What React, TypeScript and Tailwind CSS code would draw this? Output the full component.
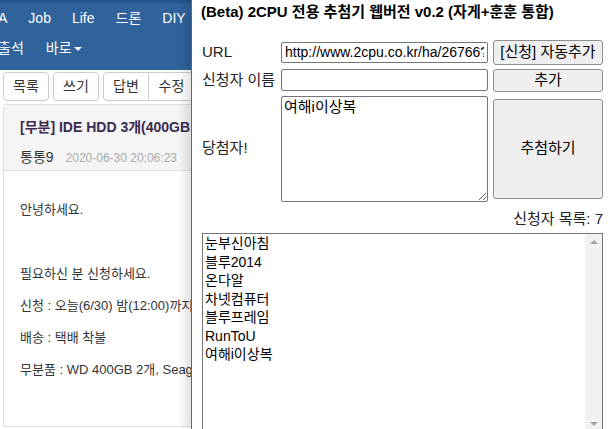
const ko = "font-['Liberation_Sans','Noto_Sans_CJK_KR',sans-serif]";

const APPLICANTS = ["눈부신아침", "블루2014", "온다알", "차넷컴퓨터", "블루프레임", "RunToU", "여해i이상복"];

function BoardPage() {
  return (
    <div className={`w-[640px] ${ko} text-[#333]`}>
      <div className="h-[70px] bg-[#30639b] border-t-[3px] border-[#28548a] text-white text-[14px]">
        <div className="flex h-[30px] items-center gap-[21px] ml-[-2px]">
          <span>A</span>
          <span>Job</span>
          <span>Life</span>
          <span>드론</span>
          <span>DIY</span>
        </div>
        <div className="flex h-[30px] items-center gap-[22px] ml-[-2px]">
          <span>출석</span>
          <span className="flex items-center gap-[2px]">
            바로
            <span className="inline-block border-x-[4px] border-t-[4px] border-x-transparent border-t-white mt-[2px]" />
          </span>
        </div>
      </div>
      <div className="flex px-[3px] pt-[2px] text-[14px]">
        <div className="w-[46px] h-[29px] flex items-center justify-center border border-[#ccc] rounded-[4px] bg-white">목록</div>
        <div className="w-[46px] h-[29px] ml-[4px] flex items-center justify-center border border-[#ccc] rounded-[4px] bg-white">쓰기</div>
        <div className="ml-[4px] flex">
          <div className="w-[46px] h-[29px] flex items-center justify-center border border-[#ccc] rounded-l-[4px] bg-white">답변</div>
          <div className="w-[46px] h-[29px] flex items-center justify-center border border-l-0 border-[#ccc] bg-white">수정</div>
        </div>
      </div>
      <div className="mx-[3px] mt-[3px] border border-[#ddd] rounded-t-[4px]">
        <div className="bg-[#f5f5f5] border-b border-[#ddd] px-[16px] pt-[12px] h-[66px]">
          <div className="text-[14px] font-bold text-[#3a2a50] whitespace-nowrap">[무분] IDE HDD 3개(400GB 2개, 250GB 1개)</div>
          <div className="mt-[9px] flex items-baseline gap-[12px]">
            <span className="text-[14px]">통통9</span>
            <span className="text-[12px] text-[#aaa]">2020-06-30 20:06:23</span>
          </div>
        </div>
        <div className="px-[16px] pt-[23px] pb-[40px] text-[13px] leading-[32px] whitespace-nowrap">
          <p>안녕하세요.</p>
          <p>&nbsp;</p>
          <p>필요하신 분 신청하세요.</p>
          <p>신청 : 오늘(6/30) 밤(12:00)까지</p>
          <p>배송 : 택배 착불</p>
          <p>무분품 : WD 400GB 2개, Seagate 250GB 1개</p>
        </div>
      </div>
    </div>
  );
}

function DrawPanel() {
  const btn = "flex items-center justify-center border border-[#8f8f8f] rounded-[3px] bg-[#efefef] text-[15px] text-black whitespace-nowrap";
  const field = "w-full border border-[#767676] rounded-[2px] text-black outline-none";
  return (
    <div className={`absolute top-0 left-[191px] w-[418px] h-[429px] bg-white border-l border-[#666] shadow-[-6px_0_8px_rgba(0,0,0,0.12)] pl-[10px] pr-[6px] ${ko} text-black`}>
      <div className="pt-[1px] text-[15px] font-bold ml-[-1px] whitespace-nowrap">
        (Beta) 2CPU 전용 추첨기 웹버전 v0.2 (자게+훈훈 통합)
      </div>
      <div className="mt-[16px] grid grid-cols-[74px_207px_110px] gap-x-[5px] items-center text-[15px]">
        <div className="text-[#222]">URL</div>
        <input
          readOnly
          value="http://www.2cpu.co.kr/ha/26766?page=1"
          className={`${field} h-[21px] px-[3px] text-[14px] ${ko}`}
        />
        <div className={`${btn} h-[25px]`}>[신청] 자동추가</div>

        <div className="mt-[4px] text-[#222] whitespace-nowrap">신청자 이름</div>
        <input readOnly value="" className={`${field} mt-[4px] h-[22px]`} />
        <div className={`${btn} mt-[4px] h-[23px]`}>추가</div>

        <div className="mt-[4px] text-[#222]">당첨자!</div>
        <textarea
          readOnly
          value="여해i이상복"
          className={`${field} mt-[4px] h-[106px] px-[2px] py-0 text-[15px] leading-[20px] resize-y ${ko}`}
        />
        <div className={`${btn} mt-[4px] h-[100px]`}>추첨하기</div>
      </div>
      <div className="mt-[6px] text-right text-[15px] text-[#222]">신청자 목록: 7</div>
      <div className="mt-[3px] h-[200px] border border-[#767676] flex">
        <div className="flex-1 pl-[2px] text-[14px] leading-[18.5px]">
          {APPLICANTS.map((n) => (
            <div key={n}>{n}</div>
          ))}
        </div>
        <div className="w-[17px] bg-[#f1f1f1] flex flex-col justify-between items-center py-[6px]">
          <span className="border-x-[4px] border-b-[4px] border-x-transparent border-b-[#a3a3a3]" />
          <span className="border-x-[4px] border-t-[4px] border-x-transparent border-t-[#a3a3a3]" />
        </div>
      </div>
    </div>
  );
}

export default function App() {
  return (
    <div className="relative w-[609px] h-[429px] overflow-hidden bg-white">
      <BoardPage />
      <DrawPanel />
    </div>
  );
}
